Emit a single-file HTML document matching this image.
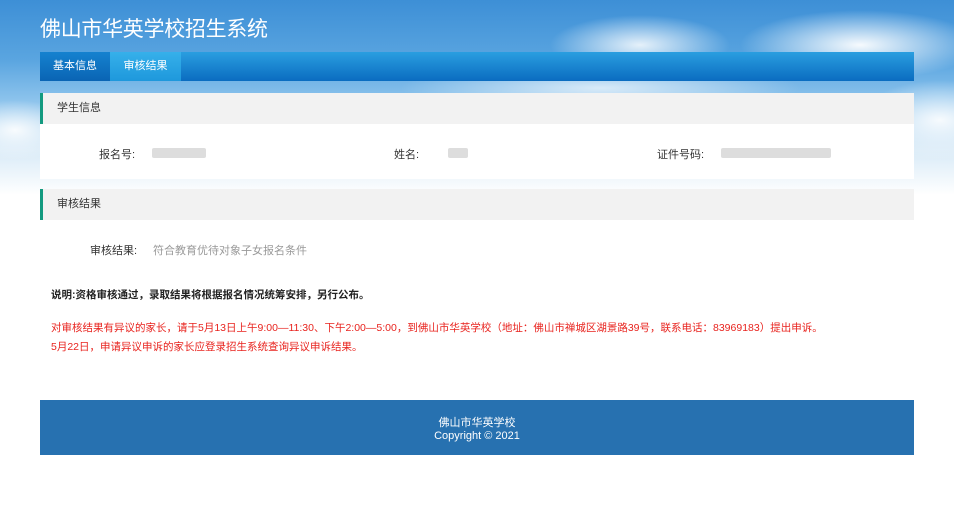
<!DOCTYPE html>
<html><head><meta charset="utf-8"><style>
*{margin:0;padding:0;box-sizing:border-box}
body{width:954px;height:515px;overflow:hidden;background:#fff;font-family:"Liberation Sans","Noto Sans CJK SC",sans-serif;position:relative}
.sky{position:absolute;left:0;top:0;width:954px;height:200px;
background:
radial-gradient(ellipse 90px 30px at 640px 45px,rgba(255,255,255,.85),rgba(255,255,255,0)),
radial-gradient(ellipse 120px 35px at 860px 45px,rgba(255,255,255,.95),rgba(255,255,255,0)),
radial-gradient(ellipse 80px 40px at 940px 120px,rgba(255,255,255,.9),rgba(255,255,255,0)),
radial-gradient(ellipse 60px 30px at 15px 130px,rgba(255,255,255,.9),rgba(255,255,255,0)),
radial-gradient(ellipse 200px 25px at 600px 88px,rgba(255,255,255,.7),rgba(255,255,255,0)),
linear-gradient(180deg,#3d8fd6 0,#5aa5e0 60px,#8cc3ec 100px,#d8eaf7 150px,#fff 195px);}
.title{position:absolute;left:40px;top:13px;color:#fff;font-size:21px;letter-spacing:-0.3px}
.nav{position:absolute;left:40px;top:52px;width:874px;height:29px;background:linear-gradient(180deg,#2a9ee0,#0a6cc0);}
.tab{position:absolute;top:0;height:29px;line-height:29px;color:#fff;font-size:11px;text-align:center}
.t1{left:0;width:70px;background:linear-gradient(180deg,#1582cf,#0a64b4)}
.t2{left:70px;width:71px;background:linear-gradient(180deg,#36b0ea,#1e98dc)}
.panel{position:absolute;left:40px;width:874px;background:#fff}
.ph{height:31px;background:#f2f2f2;border-left:3px solid #139a80;font-size:11px;color:#333;line-height:31px;padding-left:14px}
.lbl{position:absolute;font-size:11px;color:#333}
.blur{position:absolute;height:10px;background:#ddd;border-radius:2px}
.foot{position:absolute;left:40px;top:400px;width:874px;height:55px;background:#2771b0;color:#fff;font-size:11px;text-align:center;padding-top:17px;line-height:13px}
</style></head><body>
<div class="sky"></div>
<div class="title">佛山市华英学校招生系统</div>
<div class="nav"><div class="tab t1">基本信息</div><div class="tab t2">审核结果</div></div>
<div class="panel" style="top:93px;height:86px">
<div class="ph">学生信息</div>
<div class="lbl" style="left:59px;top:53px">报名号:</div><div class="blur" style="left:112px;top:55px;width:54px"></div>
<div class="lbl" style="left:354px;top:53px">姓名:</div><div class="blur" style="left:408px;top:55px;width:20px"></div>
<div class="lbl" style="left:617px;top:53px">证件号码:</div><div class="blur" style="left:681px;top:55px;width:110px"></div>
</div>
<div class="panel" style="top:189px;height:173px">
<div class="ph">审核结果</div>
<div class="lbl" style="left:50px;top:53px">审核结果:</div>
<div class="lbl" style="left:113px;top:53px;color:#999">符合教育优待对象子女报名条件</div>
<div class="lbl" style="left:11px;top:98px;font-weight:bold;color:#222;font-size:10.5px">说明:资格审核通过，录取结果将根据报名情况统筹安排，另行公布。</div>
<div class="lbl" style="left:11px;top:131px;color:#e8231e;font-size:10.5px">对审核结果有异议的家长，请于5月13日上午9:00—11:30、下午2:00—5:00，到佛山市华英学校（地址：佛山市禅城区湖景路39号，联系电话：83969183）提出申诉。</div>
<div class="lbl" style="left:11px;top:150px;color:#e8231e;font-size:10.5px">5月22日，申请异议申诉的家长应登录招生系统查询异议申诉结果。</div>
</div>
<div class="foot">佛山市华英学校<br>Copyright © 2021</div>
</body></html>
